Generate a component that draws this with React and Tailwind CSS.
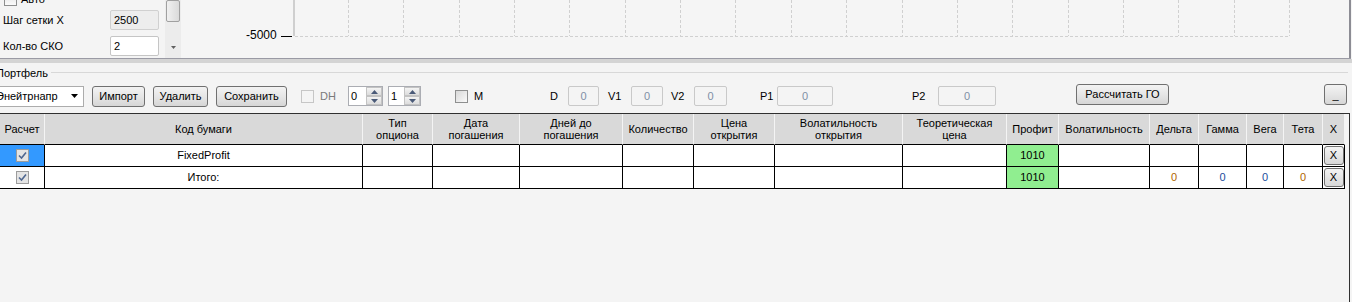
import React from 'react';
import clsx from 'clsx';

const Btn = ({ className, children }) => (
  <div
    className={clsx(
      'h-[21px] shrink-0 border border-[#707070] rounded-[3px] bg-linear-to-b from-[#f3f3f3] via-[#e6e6e6] to-[#d6d6d6] flex items-center justify-center',
      className
    )}
  >
    {children}
  </div>
);

const ValueBox = ({ className }) => (
  <div
    className={clsx(
      'h-[20px] shrink-0 border border-[#c9c9c9] rounded-[2px] bg-[#f4f4f4] flex items-center justify-center text-[#7f8fa6]',
      className
    )}
  >
    0
  </div>
);

const SpinArrow = ({ up }) => (
  <div className="flex-1 border border-[#c3c3c3] bg-linear-to-b from-[#f4f4f4] to-[#dcdcdc] flex items-center justify-center">
    <svg width="7" height="4" viewBox="0 0 7 4">
      <path d={up ? 'M0 4 L3.5 0 L7 4 Z' : 'M0 0 L3.5 4 L7 0 Z'} fill="#4a5a78" />
    </svg>
  </div>
);

const Spin = ({ value, className }) => (
  <div className={clsx('h-[20px] shrink-0 border border-[#abadb3] bg-white flex', className)}>
    <span className="flex-1 pl-[2px] leading-[18px]">{value}</span>
    <div className="w-[16px] flex flex-col">
      <SpinArrow up />
      <SpinArrow />
    </div>
  </div>
);

const GridCheck = () => (
  <span className="w-[13px] h-[13px] border border-[#9c9c9c] bg-[#e4e4e4] flex items-center justify-center">
    <svg width="9" height="9" viewBox="0 0 9 9">
      <path d="M1 4.5 L3.5 7 L8 1.5" stroke="#4f6790" strokeWidth="1.6" fill="none" />
    </svg>
  </span>
);

const XButton = () => (
  <div className="w-[20px] h-[19px] border border-[#707070] rounded-[3px] bg-linear-to-b from-[#f3f3f3] to-[#d8d8d8] flex items-center justify-center">
    X
  </div>
);

const columns = [
  { w: 'w-[45px]', title: ['Расчет'] },
  { w: 'w-[318px]', title: ['Код бумаги'] },
  { w: 'w-[70px]', title: ['Тип', 'опциона'] },
  { w: 'w-[87px]', title: ['Дата', 'погашения'] },
  { w: 'w-[103px]', title: ['Дней до', 'погашения'] },
  { w: 'w-[71px]', title: ['Количество'] },
  { w: 'w-[81px]', title: ['Цена', 'открытия'] },
  { w: 'w-[128px]', title: ['Волатильность', 'открытия'] },
  { w: 'w-[104px]', title: ['Теоретическая', 'цена'] },
  { w: 'w-[52px]', title: ['Профит'] },
  { w: 'w-[91px]', title: ['Волатильность'] },
  { w: 'w-[49px]', title: ['Дельта'] },
  { w: 'w-[48px]', title: ['Гамма'] },
  { w: 'w-[37px]', title: ['Вега'] },
  { w: 'w-[39px]', title: ['Тета'] },
  { w: 'w-[22px]', title: ['X'] },
];

const rows = [
  { selected: true, name: 'FixedProfit', greeks: ['', '', '', ''] },
  { selected: false, name: 'Итого:', greeks: ['0', '0', '0', '0'] },
];

const greekColors = ['text-[#b06400]', 'text-[#1a4c9c]', 'text-[#1a4c9c]', 'text-[#b06400]'];

const Chart = () => {
  const xs = Array.from({ length: 18 }, (_, i) => 55 + i * 55.35);
  return (
    <svg width="1056" height="58" className="block shrink-0">
      <line x1="1" y1="0" x2="1" y2="36" stroke="#cfcfcf" strokeWidth="2" />
      <line x1="2" y1="36.5" x2="996" y2="36.5" stroke="#d0d0d0" strokeDasharray="3 2" />
      {xs.map((x) => (
        <line key={x} x1={Math.round(x) + 0.5} y1="0" x2={Math.round(x) + 0.5} y2="36" stroke="#d0d0d0" strokeDasharray="3 2" />
      ))}
    </svg>
  );
};

export default function App() {
  return (
    <div className="w-[1352px] h-[302px] overflow-hidden bg-[#f4f4f4] font-['Liberation_Sans',Arial,sans-serif] text-[11px] text-black flex flex-col">
      {/* top: settings + chart */}
      <div className="h-[59px] w-[1351px] shrink-0 flex border-b border-[#9a9aa4]">
        <div className="w-[165px] shrink-0 flex flex-col pl-[3px] mt-[-11px]">
          <div className="h-[20px] flex items-center">
            <span className="ml-[1px] w-[13px] h-[13px] border border-[#8e8f8f] bg-linear-to-b from-[#e2e2e2] to-[#fbfbfb]" />
            <span className="ml-[4px]">Авто</span>
          </div>
          <div className="h-[20px] mt-[1px] flex items-center">
            <span className="w-[107px]">Шаг сетки X</span>
            <div className="w-[49px] h-[20px] border border-[#d0d0d0] rounded-[2px] bg-[#ededed] pl-[3px] leading-[18px]">2500</div>
          </div>
          <div className="h-[20px] mt-[6px] flex items-center">
            <span className="w-[107px]">Кол-во СКО</span>
            <div className="w-[49px] h-[20px] border border-[#c5c5c5] rounded-[2px] bg-white pl-[3px] leading-[18px]">2</div>
          </div>
        </div>
        <div className="w-[16px] shrink-0 bg-[#ececec] flex flex-col items-center">
          <div className="w-[14px] h-[22px] border border-[#a0a0a0] rounded-[2px] bg-linear-to-r from-[#f0f0f0] to-[#dadada]" />
          <div className="flex-1" />
          <svg width="5" height="3" viewBox="0 0 5 3" className="mb-[9px]">
            <path d="M0 0 L2.5 3 L5 0 Z" fill="#606060" />
          </svg>
        </div>
        <div className="flex-1 flex bg-[#f5f5f5] border-r-2 border-[#8c8c94]">
          <div className="w-[112px] shrink-0 flex items-start pt-[28px]">
            <span className="ml-[65px] text-[12px] leading-[14px]">-5000</span>
            <span className="ml-[4px] mt-[8px] w-[11px] h-px bg-black" />
          </div>
          <Chart />
        </div>
      </div>
      <div className="h-[4px] shrink-0 bg-[#d4d4d4]" />

      {/* portfolio group */}
      <div className="flex-1 flex flex-col ml-[-10px]">
        <div className="h-[20px] shrink-0 flex items-center">
          <span className="ml-[6px]">Портфель</span>
          <span className="flex-1 ml-[3px] mr-[4px] mt-[-1px] h-px bg-[#d8d8d8]" />
        </div>
        <div className="h-[26px] shrink-0 flex items-center">
          <div className="ml-[3px] w-[91px] h-[21px] shrink-0 border border-[#acacac] bg-white flex items-center">
            <span className="flex-1 pl-[2px]">Энейтрнапр</span>
            <svg width="7" height="4" viewBox="0 0 7 4" className="mr-[5px]">
              <path d="M0 0 L3.5 4 L7 0 Z" fill="#000" />
            </svg>
          </div>
          <Btn className="ml-[8px] w-[53px]">Импорт</Btn>
          <Btn className="ml-[8px] w-[55px]">Удалить</Btn>
          <Btn className="ml-[8px] w-[71px]">Сохранить</Btn>
          <span className="ml-[14px] w-[13px] h-[13px] shrink-0 border border-[#c6c6c6] bg-[#f4f4f4]" />
          <span className="ml-[6px] w-[28px] shrink-0 text-[#7a7a7a]">DH</span>
          <Spin value="0" className="w-[35px]" />
          <Spin value="1" className="ml-[5px] w-[33px]" />
          <span className="ml-[34px] w-[13px] h-[13px] shrink-0 border border-[#8e8f8f] bg-linear-to-br from-[#d8d8d8] to-[#fafafa]" />
          <span className="ml-[6px] w-[76px] shrink-0">M</span>
          <span className="w-[18px] shrink-0">D</span>
          <ValueBox className="w-[31px]" />
          <span className="ml-[9px] w-[23px] shrink-0">V1</span>
          <ValueBox className="w-[32px]" />
          <span className="ml-[8px] w-[23px] shrink-0">V2</span>
          <ValueBox className="w-[33px]" />
          <span className="ml-[33px] w-[17px] shrink-0">P1</span>
          <ValueBox className="w-[56px]" />
          <span className="ml-[79px] w-[26px] shrink-0">P2</span>
          <ValueBox className="w-[58px]" />
          <Btn className="ml-[80px] w-[93px] self-start mt-[1px]">Рассчитать ГО</Btn>
          <Btn className="ml-[155px] w-[23px] self-start mt-[1px] items-end pb-[3px] leading-none">_</Btn>
        </div>

        {/* grid */}
        <div className="mt-[4px] ml-[10px] w-[1350px] flex-1 border-t border-r border-[#303030] flex flex-col">
          <div className="flex h-[31px] shrink-0">
            {columns.map((c, i) => (
              <div
                key={i}
                className={clsx(
                  c.w,
                  'shrink-0 h-full bg-[#d9d9d9] border-r border-b border-r-[#f4f4f4] border-b-black flex flex-col items-center justify-center text-center leading-[12px]'
                )}
              >
                {c.title.map((t) => (
                  <span key={t}>{t}</span>
                ))}
              </div>
            ))}
          </div>
          {rows.map((r, ri) => (
            <div key={ri} className="flex h-[22px] shrink-0">
              {columns.map((c, i) => {
                let content = null;
                let bg = 'bg-white';
                if (i === 0) {
                  content = <GridCheck />;
                  if (r.selected) bg = 'bg-[#3399ff]';
                } else if (i === 1) {
                  content = r.name;
                } else if (i === 9) {
                  content = '1010';
                  bg = 'bg-[#90ee90]';
                } else if (i >= 11 && i <= 14) {
                  content = <span className={greekColors[i - 11]}>{r.greeks[i - 11]}</span>;
                } else if (i === 15) {
                  content = <XButton />;
                }
                return (
                  <div
                    key={i}
                    className={clsx(
                      c.w,
                      bg,
                      'shrink-0 h-full border-r border-b border-black flex items-center justify-center'
                    )}
                  >
                    {content}
                  </div>
                );
              })}
            </div>
          ))}
        </div>
      </div>
    </div>
  );
}
